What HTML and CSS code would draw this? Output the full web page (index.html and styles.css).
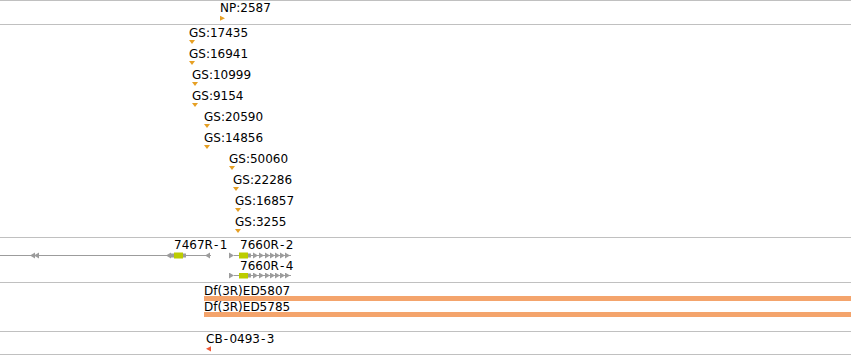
FILE: index.html
```html
<!DOCTYPE html>
<html lang="en">
<head>
    <meta charset="UTF-8">
    <title>Tracks</title>
    <link rel="stylesheet" href="styles.css">
</head>
<body>

<!-- NP track -->
<div class="track track-np">
    <div class="feat" style="margin-left:220px">
        <div class="lbl">NP:2587</div>
        <svg class="mark" width="6" height="8"><polygon points="0,0.7 5,3.2 0,5.7" fill="#e6a024"/></svg>
    </div>
</div>

<!-- GS track -->
<div class="track track-gs">
    <div class="feat" style="margin-left:189px"><div class="lbl">GS:17435</div><svg class="mark" width="6" height="8"><polygon points="0,0 6,0 3,4" fill="#e6a024"/></svg></div>
    <div class="feat" style="margin-left:189px"><div class="lbl">GS:16941</div><svg class="mark" width="6" height="8"><polygon points="0,0 6,0 3,4" fill="#e6a024"/></svg></div>
    <div class="feat" style="margin-left:192px"><div class="lbl">GS:10999</div><svg class="mark" width="6" height="8"><polygon points="0,0 6,0 3,4" fill="#e6a024"/></svg></div>
    <div class="feat" style="margin-left:192px"><div class="lbl">GS:9154</div><svg class="mark" width="6" height="8"><polygon points="0,0 6,0 3,4" fill="#e6a024"/></svg></div>
    <div class="feat" style="margin-left:204px"><div class="lbl">GS:20590</div><svg class="mark" width="6" height="8"><polygon points="0,0 6,0 3,4" fill="#e6a024"/></svg></div>
    <div class="feat" style="margin-left:204px"><div class="lbl">GS:14856</div><svg class="mark" width="6" height="8"><polygon points="0,0 6,0 3,4" fill="#e6a024"/></svg></div>
    <div class="feat" style="margin-left:229px"><div class="lbl">GS:50060</div><svg class="mark" width="6" height="8"><polygon points="0,0 6,0 3,4" fill="#e6a024"/></svg></div>
    <div class="feat" style="margin-left:233px"><div class="lbl">GS:22286</div><svg class="mark" width="6" height="8"><polygon points="0,0 6,0 3,4" fill="#e6a024"/></svg></div>
    <div class="feat" style="margin-left:235px"><div class="lbl">GS:16857</div><svg class="mark" width="6" height="8"><polygon points="0,0 6,0 3,4" fill="#e6a024"/></svg></div>
    <div class="feat" style="margin-left:235px"><div class="lbl">GS:3255</div><svg class="mark" width="6" height="8"><polygon points="0,0 6,0 3,4" fill="#e6a024"/></svg></div>
</div>

<!-- gene models -->
<div class="track track-genes">
    <div class="lane">
        <div class="lbl-row">
            <span class="lbl" style="margin-left:174px;width:66px">7467R<span class="dash">-</span>1</span>
            <span class="lbl">7660R<span class="dash">-</span>2</span>
        </div>
        <svg class="gene" width="851" height="8">
            <g fill="#9c9c9c">
                <rect x="0" y="3" width="211" height="1"/>
                <polygon points="30,3.5 35,0.5 35,6.5"/>
                <polygon points="34,3.5 39,0.5 39,6.5"/>
                <polygon points="166,3.5 171,0.5 171,6.5"/>
                <rect x="171" y="1.5" width="3" height="4"/>
                <rect x="183" y="1.5" width="3" height="4"/>
                <polygon points="205,3.5 210,0.5 210,6.5"/>
            </g>
            <rect x="174" y="0.5" width="9" height="6" fill="#bccc00"/>
            <g fill="#9c9c9c">
                <polygon points="229,0.5 229,6.5 234,3.5"/>
                <rect x="234" y="3" width="5" height="1"/>
                <rect x="248" y="1.5" width="3" height="4"/>
                <rect x="251" y="3" width="40" height="1"/>
                <polygon points="253,0.5 253,6.5 258,3.5"/>
                <polygon points="259,0.5 259,6.5 264,3.5"/>
                <polygon points="265,0.5 265,6.5 270,3.5"/>
                <polygon points="270,0.5 270,6.5 275,3.5"/>
                <polygon points="275,0.5 275,6.5 280,3.5"/>
                <polygon points="280,0.5 280,6.5 285,3.5"/>
                <polygon points="285,0.5 285,6.5 290,3.5"/>
            </g>
            <rect x="239" y="0.5" width="9" height="6" fill="#bccc00"/>
        </svg>
    </div>
    <div class="lane">
        <div class="lbl-row">
            <span class="lbl" style="margin-left:240px">7660R<span class="dash">-</span>4</span>
        </div>
        <svg class="gene" width="851" height="8">
            <g transform="translate(0,-1)">
                <g fill="#9c9c9c">
                    <polygon points="229,0.5 229,6.5 234,3.5"/>
                    <rect x="234" y="3" width="5" height="1"/>
                    <rect x="248" y="1.5" width="3" height="4"/>
                    <rect x="251" y="3" width="40" height="1"/>
                    <polygon points="253,0.5 253,6.5 258,3.5"/>
                    <polygon points="259,0.5 259,6.5 264,3.5"/>
                    <polygon points="265,0.5 265,6.5 270,3.5"/>
                    <polygon points="270,0.5 270,6.5 275,3.5"/>
                    <polygon points="275,0.5 275,6.5 280,3.5"/>
                    <polygon points="280,0.5 280,6.5 285,3.5"/>
                    <polygon points="285,0.5 285,6.5 290,3.5"/>
                </g>
                <rect x="239" y="0.5" width="9" height="6" fill="#bccc00"/>
            </g>
        </svg>
    </div>
</div>

<!-- deficiencies -->
<div class="track track-df">
    <div class="df" style="margin-left:204px">
        <div class="lbl">Df(3R)ED5807</div>
        <div class="df-bar"></div>
    </div>
    <div class="df" style="margin-left:204px">
        <div class="lbl">Df(3R)ED5785</div>
        <div class="df-bar"></div>
    </div>
</div>

<!-- CB track -->
<div class="track track-cb">
    <div class="feat" style="margin-left:206px">
        <div class="lbl">CB<span class="dash">-</span>0493<span class="dash">-</span>3</div>
        <svg class="mark" width="6" height="8"><polygon points="0,2.8 5,0.3 5,5.5" fill="#f15a36"/></svg>
    </div>
</div>

</body>
</html>
```

FILE: styles.css
```css
body {
    margin: 0;
    background-color: white;
    font-family: "DejaVu Sans", Verdana, sans-serif;
    font-size: 12px;
    color: #000;
    width: 851px;
    overflow: hidden;
}

.track {
    border-bottom: 1px solid #c0c0c0;
    overflow: hidden;
}

.track-np {
    border-top: 1px solid #c0c0c0;
    height: 22px;
    padding-top: 1px;
}

.track-gs {
    height: 210px;
    padding-top: 2px;
}

.track-genes {
    height: 43px;
    padding-top: 1px;
}

.track-df {
    height: 45px;
    padding-top: 3px;
}

.track-cb {
    height: 21px;
    padding-top: 1px;
}

.feat .lbl,
.lbl-row {
    height: 13px;
    line-height: 13px;
    white-space: nowrap;
}

.lbl-row {
    display: flex;
}

.lbl-row .lbl {
    flex: none;
}

/* hyphens are drawn wider in the original renderer */
.dash {
    padding: 0 1px;
    letter-spacing: 0.5px;
}

.mark,
.gene {
    display: block;
}

.df {
    margin-bottom: 1px;
}

.df .lbl {
    height: 10px;
    line-height: 10px;
    white-space: nowrap;
}

.df-bar {
    height: 5px;
    background-color: #f4a46c;
}
```
